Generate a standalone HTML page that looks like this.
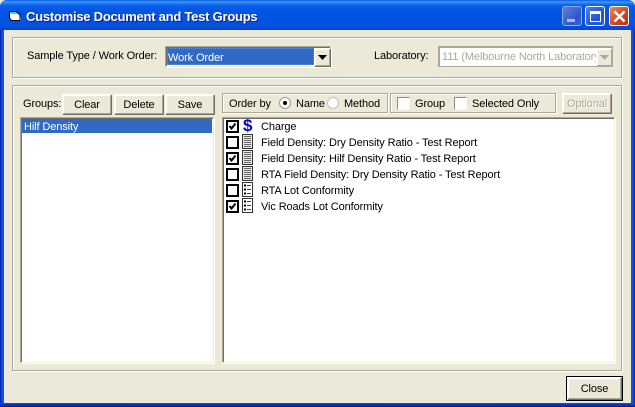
<!DOCTYPE html>
<html><head><meta charset="utf-8"><style>
html,body{margin:0;padding:0}
body{width:635px;height:407px;overflow:hidden;position:relative;background:#ece9d8;font:11px/13px "Liberation Sans",sans-serif;color:#000;letter-spacing:-.11px}
.a{position:absolute;box-sizing:border-box}
.t{position:absolute;white-space:nowrap;line-height:13px}
.etch{position:absolute;box-sizing:border-box;border:1px solid #aca899;box-shadow:inset 1px 1px 0 #fff,1px 1px 0 #fff}
.btn{position:absolute;box-sizing:border-box;background:#ece9d8;border-top:2px solid #fff;border-left:2px solid #fff;border-right:1px solid #aca899;border-bottom:1px solid #aca899;box-shadow:1px 1px 0 #716f64;text-align:center;line-height:19px}
.sunk{position:absolute;box-sizing:border-box;background:#fff;border-top:1px solid #aca899;border-left:1px solid #aca899;border-right:1px solid #f1efe2;border-bottom:1px solid #f1efe2;box-shadow:inset 1px 1px 0 #716f64,1px 1px 0 #fff}
.cb{position:absolute;left:226px;width:13px;height:13px;box-sizing:border-box;border:2px solid #000;background:#fff}
.cb svg{position:absolute;left:0;top:0}
.ck{position:absolute;width:13px;height:13px;box-sizing:border-box;background:#fff;border-top:1px solid #8f8d7e;border-left:1px solid #8f8d7e;border-right:1px solid #f8f7f0;border-bottom:1px solid #f8f7f0}
.ic{position:absolute;left:242px;width:11px;height:15px}
</style></head><body>
<!-- title bar -->
<div class="a" style="left:0;top:0;width:635px;height:407px;background:#0831d9;border-radius:7px 7px 0 0"></div>
<div class="a" style="left:0;top:0;width:635px;height:30px;border-radius:7px 7px 0 0;background:linear-gradient(180deg,#0a5ee6 0,#3f95fb 2px,#0a62ec 5px,#0055e5 10px,#0054e3 20px,#0450dc 27px,#0344c8 30px)"></div>
<div class="a" style="left:0;top:30px;width:4px;height:373px;background:linear-gradient(90deg,#0018a8,#0855dd 50%,#0a5ae8)"></div>
<div class="a" style="left:631px;top:30px;width:4px;height:373px;background:linear-gradient(90deg,#0a5ae8,#0855dd 50%,#0018a8)"></div>
<div class="a" style="left:0;top:403px;width:635px;height:4px;background:linear-gradient(180deg,#0a52e0,#0035c0 50%,#001a90)"></div>
<div class="a" style="left:4px;top:30px;width:627px;height:373px;background:#ece9d8"></div>
<svg class="a" style="left:8px;top:10px" width="14" height="12" viewBox="0 0 14 12"><path d="M1.500 1.500H8L12 5V10.500H3.500L1.500 8Z" fill="#fff" stroke="#000"/><path d="M2 2H8L9.500 4H3Z" fill="#3fd0c8"/><path d="M12.500 7V11" stroke="#5a6a80"/></svg>
<div class="t" style="left:26px;top:9px;font:bold 13px/16px 'Liberation Sans',sans-serif;letter-spacing:-.24px;color:#fff;text-shadow:1px 1px 0 #0f1f8f">Customise Document and Test Groups</div>
<!-- window buttons -->
<div class="a" style="left:562px;top:6px;width:20px;height:20px;border:1px solid #8fa8e8;border-radius:3px;background:linear-gradient(135deg,#5d80df,#2f55c8 70%,#3a62d8)"></div>
<div class="a" style="left:567px;top:19px;width:8px;height:3px;background:#a8b8e8"></div>
<div class="a" style="left:585px;top:6px;width:20px;height:20px;border:1px solid #fff;border-radius:3px;background:linear-gradient(135deg,#4f7fe8,#1f50d0 70%,#2f60e0)"></div>
<div class="a" style="left:590px;top:11px;width:11px;height:11px;border:1px solid #fff;border-top-width:3px"></div>
<div class="a" style="left:609px;top:6px;width:20px;height:20px;border:1px solid #fff;border-radius:3px;background:linear-gradient(135deg,#e88a6a,#d0431c 60%,#c03010)"></div>
<svg class="a" style="left:609px;top:6px" width="20" height="20"><path d="M5.500 5.500L15.500 15.500M15.500 5.500L5.500 15.500" stroke="#fff" stroke-width="2.400"/></svg>
<!-- top group -->
<div class="etch" style="left:12px;top:37px;width:610px;height:41px"></div>
<div class="t" style="left:27px;top:50px">Sample Type / Work Order:</div>
<div class="sunk" style="left:165px;top:46px;width:166px;height:21px"></div>
<div class="a" style="left:167px;top:48px;width:147px;height:17px;background:#316ac5;border:1px dotted #c08a20"></div>
<div class="t" style="left:168px;top:51px;color:#fff;padding-top:1px">Work Order</div>
<div class="btn" style="left:314px;top:48px;width:16px;height:18px"></div>
<svg class="a" style="left:318px;top:55px" width="9" height="5"><path d="M0 0H9L4.500 5Z" fill="#000"/></svg>
<div class="t" style="left:374px;top:50px">Laboratory:</div>
<div class="a" style="left:438px;top:46px;width:175px;height:21px;background:#fff;border:1px solid #aca899;box-shadow:inset 1px 1px 0 #aca899"></div>
<div class="t" style="left:442px;top:51px;width:154px;overflow:hidden;color:#aca899;font-size:11px">111 (Melbourne North Laboratory)</div>
<div class="btn" style="left:596px;top:48px;width:16px;height:18px;box-shadow:none"></div>
<svg class="a" style="left:600px;top:55px" width="9" height="5"><path d="M0 0H9L4.500 5Z" fill="#aca899"/></svg>
<!-- main group -->
<div class="etch" style="left:12px;top:85px;width:610px;height:286px"></div>
<div class="t" style="left:23px;top:98px">Groups:</div>
<div class="btn" style="left:62px;top:94px;width:49px;height:20px">Clear</div>
<div class="btn" style="left:114px;top:94px;width:49px;height:20px">Delete</div>
<div class="btn" style="left:165px;top:94px;width:49px;height:20px">Save</div>
<div class="etch" style="left:222px;top:93px;width:166px;height:20px"></div>
<div class="t" style="left:229px;top:98px">Order by</div>
<div class="a" style="left:279px;top:97px;width:12px;height:12px;border-radius:50%;background:#fff;border:1px solid #9d9b8c"></div>
<div class="a" style="left:283px;top:101px;width:4px;height:4px;border-radius:50%;background:#000"></div>
<div class="t" style="left:296px;top:98px">Name</div>
<div class="a" style="left:327px;top:97px;width:12px;height:12px;border-radius:50%;background:#fff;border:1px solid #c4c2b4"></div>
<div class="t" style="left:344px;top:98px">Method</div>
<div class="etch" style="left:390px;top:93px;width:166px;height:20px"></div>
<div class="ck" style="left:397px;top:97px"></div>
<div class="t" style="left:415px;top:98px">Group</div>
<div class="ck" style="left:454px;top:97px"></div>
<div class="t" style="left:472px;top:98px">Selected Only</div>
<div class="btn" style="left:562px;top:93px;width:49px;height:20px;color:#aca899;text-shadow:1px 1px 0 #fff;line-height:18px">Optional</div>
<!-- lists -->
<div class="sunk" style="left:20px;top:117px;width:194px;height:246px"></div>
<div class="a" style="left:22px;top:119px;width:190px;height:14px;background:#316ac5"></div>
<div class="t" style="left:24px;top:121px;color:#fff">Hilf Density</div>
<div class="sunk" style="left:222px;top:117px;width:393px;height:246px"></div>
<!-- rows -->
<div class="cb" style="top:120px"><svg width="9" height="9"><path d="M1.500 4L3.500 6.500L7.500 1.500" fill="none" stroke="#000" stroke-width="2"/></svg></div>
<div class="t" style="left:243px;top:117px;font:bold 17px/18px 'Liberation Sans',sans-serif;color:#0000e0">$</div>
<div class="t" style="left:261px;top:121px">Charge</div>
<div class="cb" style="top:136px"></div>
<svg class="ic" style="top:134px"><rect x=".5" y=".5" width="10" height="14" fill="#e8e8e8" stroke="#333"/><path d="M2 2.500H9M2 4.500H9M2 6.500H9M2 8.500H9M2 10.500H9M2 12.500H9" stroke="#666"/></svg>
<div class="t" style="left:261px;top:137px">Field Density: Dry Density Ratio - Test Report</div>
<div class="cb" style="top:152px"><svg width="9" height="9"><path d="M1.500 4L3.500 6.500L7.500 1.500" fill="none" stroke="#000" stroke-width="2"/></svg></div>
<svg class="ic" style="top:150px"><rect x=".5" y=".5" width="10" height="14" fill="#e8e8e8" stroke="#333"/><path d="M2 2.500H9M2 4.500H9M2 6.500H9M2 8.500H9M2 10.500H9M2 12.500H9" stroke="#666"/></svg>
<div class="t" style="left:261px;top:153px">Field Density: Hilf Density Ratio - Test Report</div>
<div class="cb" style="top:168px"></div>
<svg class="ic" style="top:166px"><rect x=".5" y=".5" width="10" height="14" fill="#e8e8e8" stroke="#333"/><path d="M2 2.500H9M2 4.500H9M2 6.500H9M2 8.500H9M2 10.500H9M2 12.500H9" stroke="#666"/></svg>
<div class="t" style="left:261px;top:169px">RTA Field Density: Dry Density Ratio - Test Report</div>
<div class="cb" style="top:184px"></div>
<svg class="ic" style="top:182px"><rect x=".5" y=".5" width="10" height="14" fill="#fff" stroke="#333"/><path d="M2 3.500H4M2 7.500H4M2 11.500H4" stroke="#000" stroke-width="2"/><path d="M5 3.500H9M5 7.500H9M5 11.500H9" stroke="#444"/></svg>
<div class="t" style="left:261px;top:185px">RTA Lot Conformity</div>
<div class="cb" style="top:200px"><svg width="9" height="9"><path d="M1.500 4L3.500 6.500L7.500 1.500" fill="none" stroke="#000" stroke-width="2"/></svg></div>
<svg class="ic" style="top:198px"><rect x=".5" y=".5" width="10" height="14" fill="#fff" stroke="#333"/><path d="M2 3.500H4M2 7.500H4M2 11.500H4" stroke="#000" stroke-width="2"/><path d="M5 3.500H9M5 7.500H9M5 11.500H9" stroke="#444"/></svg>
<div class="t" style="left:261px;top:201px">Vic Roads Lot Conformity</div>
<!-- close -->
<div class="a" style="left:566px;top:376px;width:57px;height:25px;border:1px solid #000"></div>
<div class="btn" style="left:567px;top:377px;width:54px;height:22px;line-height:20px">Close</div>
</body></html>
